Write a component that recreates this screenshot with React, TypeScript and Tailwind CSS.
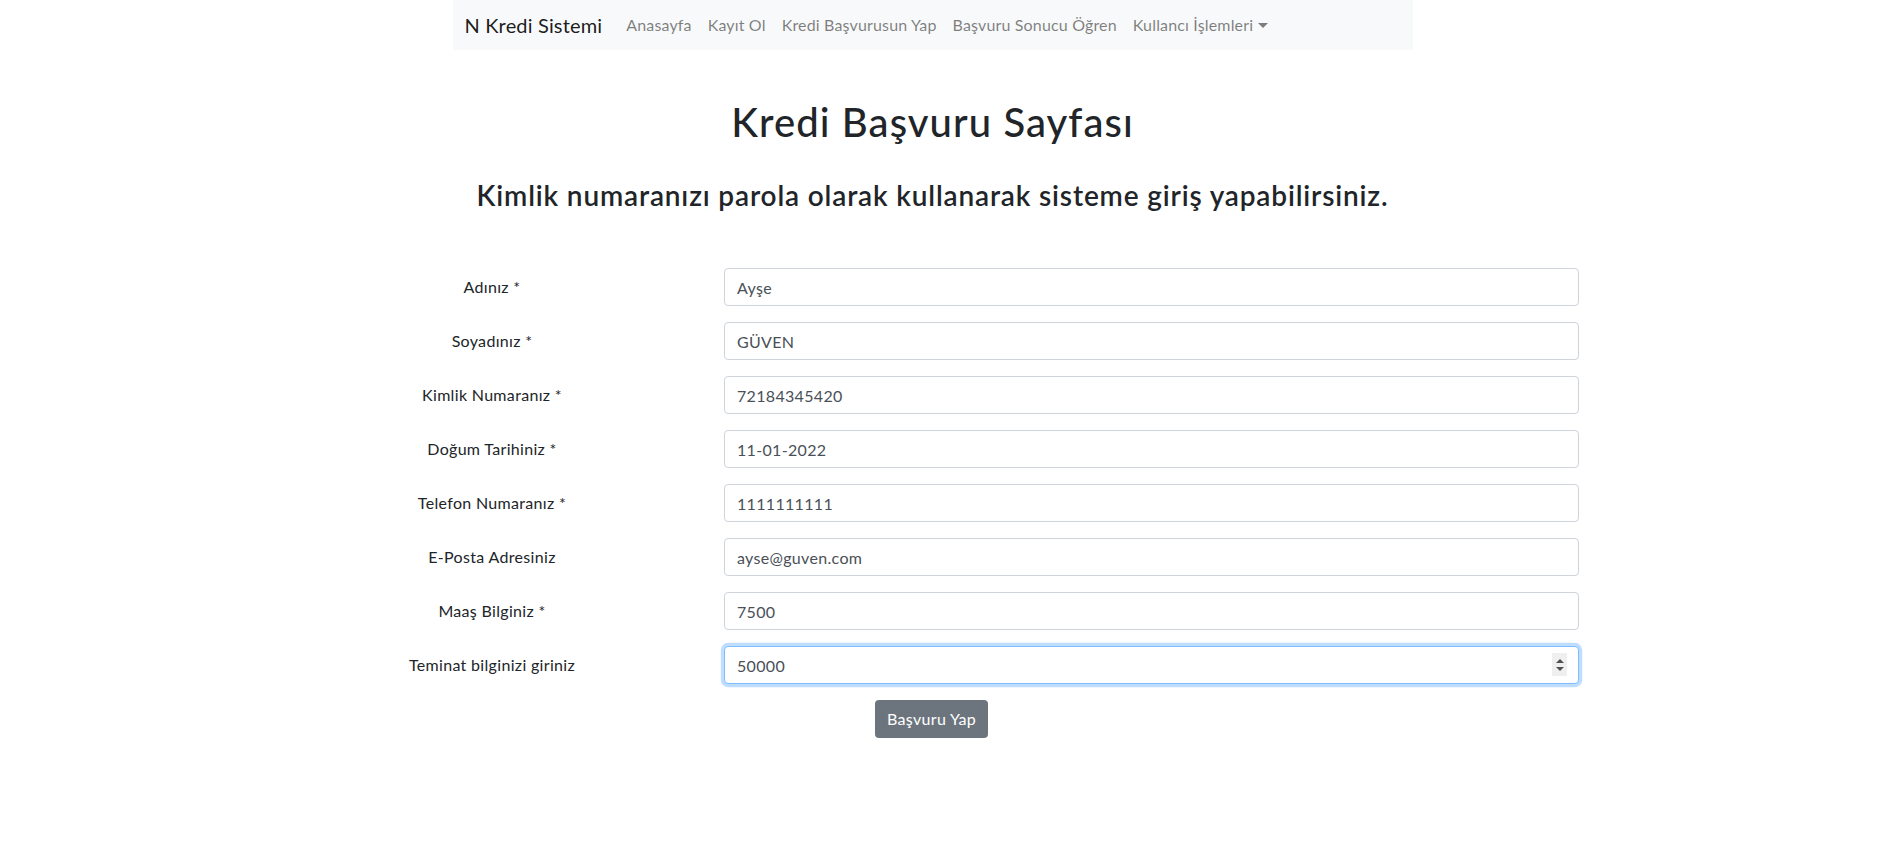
const fields = [
  { label: 'Adınız *', value: 'Ayşe' },
  { label: 'Soyadınız *', value: 'GÜVEN' },
  { label: 'Kimlik Numaranız *', value: '72184345420' },
  { label: 'Doğum Tarihiniz *', value: '11-01-2022' },
  { label: 'Telefon Numaranız *', value: '1111111111' },
  { label: 'E-Posta Adresiniz', value: 'ayse@guven.com' },
  { label: 'Maaş Bilginiz *', value: '7500' },
];

const navLinks = ['Anasayfa', 'Kayıt Ol', 'Kredi Başvurusun Yap', 'Başvuru Sonucu Öğren'];

function Navbar() {
  return (
    <nav className="mx-auto flex h-[50px] w-[960px] items-center bg-[#f8f9fa] px-3 tracking-[0.01em]">
      <span className="mr-4 text-[20px] leading-[30px] text-[rgba(0,0,0,0.9)]">N Kredi Sistemi</span>
      <ul className="flex items-center">
        {navLinks.map((l) => (
          <li key={l} className="px-2 text-[16px] leading-6 text-[rgba(0,0,0,0.5)]">
            {l}
          </li>
        ))}
        <li className="flex items-center px-2 text-[16px] leading-6 text-[rgba(0,0,0,0.5)]">
          Kullancı İşlemleri
          <span className="ml-[5px] mt-[1px] h-0 w-0 border-x-[5px] border-t-[5px] border-x-transparent border-t-[rgba(0,0,0,0.5)]" />
        </li>
      </ul>
    </nav>
  );
}

function FormRow({ label, children }: { label: string; children: React.ReactNode }) {
  return (
    <div className="mb-4 flex items-center">
      <label className="w-[300px] text-center text-[16px] text-[#212529]">{label}</label>
      <div className="ml-[82px] w-[855px]">{children}</div>
    </div>
  );
}

export default function App() {
  return (
    <div className="min-h-screen bg-white">
      <div
        className="w-[1865px] tracking-[0.02em] text-[#212529]"
        style={{ fontFamily: 'Lato, "Noto Sans", sans-serif' }}
      >
        <Navbar />
        <h1 className="mt-[48px] text-center text-[40px] font-medium leading-[48px] tracking-[0.027em]">
          Kredi Başvuru Sayfası
        </h1>
        <h3 className="mt-[32px] text-center text-[28px] font-semibold leading-[34px] tracking-[0.03em]">
          Kimlik numaranızı parola olarak kullanarak sisteme giriş yapabilirsiniz.
        </h3>
        <form className="mt-[56px] pl-[342px]">
          {fields.map((f) => (
            <FormRow key={f.label} label={f.label}>
              <input
                readOnly
                value={f.value}
                className="h-[38px] w-full rounded-[4px] border border-[#ced4da] bg-white px-3 text-[16px] text-[#495057] outline-none"
              />
            </FormRow>
          ))}
          <FormRow label="Teminat bilginizi giriniz">
            <div className="relative">
              <input
                readOnly
                value="50000"
                className="h-[38px] w-full rounded-[4px] border border-[#80bdff] bg-white px-3 text-[16px] text-[#495057] shadow-[0_0_0_3.2px_rgba(0,123,255,0.25)] outline-none"
              />
              <div className="absolute right-[12px] top-[7px] flex h-[23px] w-[15px] flex-col items-center justify-center gap-[4px] bg-[#efefef]">
                <span className="h-0 w-0 border-x-[4px] border-b-[4px] border-x-transparent border-b-[#505050]" />
                <span className="h-0 w-0 border-x-[4px] border-t-[4px] border-x-transparent border-t-[#505050]" />
              </div>
            </div>
          </FormRow>
          <button
            type="button"
            className="ml-[533px] h-[38px] w-[113px] rounded-[4px] bg-[#6c757d] text-[16px] text-white"
          >
            Başvuru Yap
          </button>
        </form>
      </div>
    </div>
  );
}
